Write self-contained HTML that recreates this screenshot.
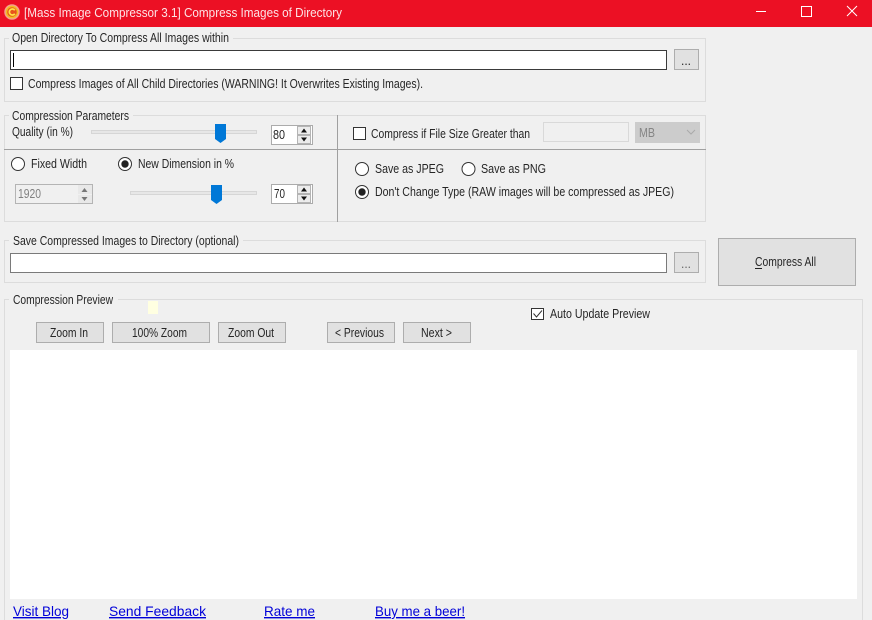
<!DOCTYPE html>
<html><head><meta charset="utf-8"><title>Mass Image Compressor</title>
<style>
html,body{margin:0;padding:0;width:872px;height:620px;overflow:hidden;background:#f0f0f0}
svg{display:block;font-family:"Liberation Sans",sans-serif;font-size:12.5px}
text{fill:#262626}
.g{fill:none;stroke:#dcdcdc}
.b{fill:#e1e1e1;stroke:#adadad}
.d{stroke:#a0a0a0;fill:none}
.l{font-size:14px;fill:#0000d8;text-decoration:underline}
</style></head><body>
<svg width="872" height="620" viewBox="0 0 872 620" xmlns="http://www.w3.org/2000/svg">
<rect width="872" height="620" fill="#f0f0f0"/>
<!-- title bar -->
<rect width="872" height="27" fill="#ec1024"/>
<circle cx="12" cy="12" r="7" fill="#f0c020" stroke="#f7a08a" stroke-width="1.500"/>
<circle cx="12" cy="12" r="4.800" fill="#e8541c"/>
<path d="M14.800 10.300A3 3 0 1 0 14.800 13.700" fill="none" stroke="#ffe14a" stroke-width="1.800"/>
<text x="24" y="17" textLength="318" lengthAdjust="spacingAndGlyphs" style="fill:#fde4e6;font-size:13px">[Mass Image Compressor 3.1] Compress Images of Directory</text>
<path d="M756 11.500H766" stroke="#fff" fill="none"/>
<rect x="801.500" y="6.500" width="10" height="10" fill="none" stroke="#fff"/>
<path d="M847 6L857 16M857 6L847 16" stroke="#fff" fill="none"/>

<!-- group 1 -->
<rect class="g" x="4.500" y="38.500" width="701" height="63"/>
<rect x="9" y="36" width="224" height="5" fill="#f0f0f0"/>
<text x="12" y="42" textLength="217" lengthAdjust="spacingAndGlyphs">Open Directory To Compress All Images within</text>
<rect x="10.500" y="50.500" width="656" height="19" fill="#fff" stroke="#3a3a3a"/>
<path d="M13.500 53V67" stroke="#000"/>
<rect class="b" x="674.500" y="49.500" width="24" height="20"/>
<text x="681" y="65" textLength="10" lengthAdjust="spacingAndGlyphs">...</text>
<rect x="10.500" y="77.500" width="12" height="12" fill="#fff" stroke="#333"/>
<text x="28" y="88" textLength="395" lengthAdjust="spacingAndGlyphs">Compress Images of All Child Directories (WARNING! It Overwrites Existing Images).</text>

<!-- params -->
<rect class="g" x="4.500" y="115.500" width="701" height="106"/>
<rect x="9" y="113" width="124" height="5" fill="#f0f0f0"/>
<path class="d" d="M4 149.500H706M337.500 115V222"/>
<text x="12" y="120" textLength="117" lengthAdjust="spacingAndGlyphs">Compression Parameters</text>
<text x="12" y="136" textLength="61" lengthAdjust="spacingAndGlyphs">Quality (in %)</text>
<rect x="91.500" y="130.500" width="165" height="3" fill="#e7e7e7" stroke="#d6d6d6"/>
<path d="M215 124H226V139L220.500 143L215 139Z" fill="#0078d7"/>
<rect x="271.500" y="125.500" width="41" height="19" fill="#fff" stroke="#ababab"/>
<text x="273" y="139" textLength="12" lengthAdjust="spacingAndGlyphs">80</text>
<rect x="297.500" y="126.500" width="13" height="8" fill="#ececec" stroke="#b4b4b4"/>
<rect x="297.500" y="135.500" width="13" height="8" fill="#ececec" stroke="#b4b4b4"/>
<path d="M301 132.500L304 128.500L307 132.500ZM301 137.500L304 141.500L307 137.500Z" fill="#111"/>

<circle cx="18" cy="164" r="6.500" fill="#fff" stroke="#333"/>
<text x="31" y="168" textLength="56" lengthAdjust="spacingAndGlyphs">Fixed Width</text>
<circle cx="125" cy="164" r="6.500" fill="#fff" stroke="#333"/>
<circle cx="125" cy="164" r="3.700" fill="#222"/>
<text x="138" y="168" textLength="96" lengthAdjust="spacingAndGlyphs">New Dimension in %</text>

<rect x="15.500" y="184.500" width="77" height="19" fill="#f0f0f0" stroke="#b4b4b4"/>
<text x="18" y="198" textLength="23" lengthAdjust="spacingAndGlyphs" style="fill:#808080">1920</text>
<rect x="78" y="185" width="14" height="9" fill="#e8e8e8"/>
<rect x="78" y="195" width="14" height="8" fill="#e8e8e8"/>
<path d="M81.500 192L84.500 188L87.500 192ZM81.500 197L84.500 201L87.500 197Z" fill="#777"/>
<rect x="130.500" y="191.500" width="126" height="3" fill="#e7e7e7" stroke="#d6d6d6"/>
<path d="M211 185H222V200L216.500 204L211 200Z" fill="#0078d7"/>
<rect x="271.500" y="184.500" width="41" height="19" fill="#fff" stroke="#ababab"/>
<text x="274" y="198" textLength="11" lengthAdjust="spacingAndGlyphs">70</text>
<rect x="297.500" y="185.500" width="13" height="8" fill="#ececec" stroke="#b4b4b4"/>
<rect x="297.500" y="194.500" width="13" height="8" fill="#ececec" stroke="#b4b4b4"/>
<path d="M301 191.500L304 187.500L307 191.500ZM301 196.500L304 200.500L307 196.500Z" fill="#111"/>

<!-- right params -->
<rect x="353.500" y="127.500" width="12" height="12" fill="#fff" stroke="#333"/>
<text x="371" y="138" textLength="159" lengthAdjust="spacingAndGlyphs">Compress if File Size Greater than</text>
<rect x="543.500" y="122.500" width="85" height="19" fill="#f0f0f0" stroke="#d9d9d9"/>
<rect x="635" y="122" width="65" height="21" fill="#cccccc"/>
<text x="639" y="137" textLength="16" lengthAdjust="spacingAndGlyphs" style="fill:#858585">MB</text>
<path d="M687 130L691 134L695 130" fill="none" stroke="#aaa"/>
<circle cx="362" cy="169" r="6.500" fill="#fff" stroke="#333"/>
<text x="375" y="173" textLength="69" lengthAdjust="spacingAndGlyphs">Save as JPEG</text>
<circle cx="468.500" cy="169" r="6.500" fill="#fff" stroke="#333"/>
<text x="481" y="173" textLength="65" lengthAdjust="spacingAndGlyphs">Save as PNG</text>
<circle cx="362" cy="192" r="6.500" fill="#fff" stroke="#333"/>
<circle cx="362" cy="192" r="3.700" fill="#222"/>
<text x="375" y="196" textLength="299" lengthAdjust="spacingAndGlyphs">Don't Change Type (RAW images will be compressed as JPEG)</text>

<!-- save group -->
<rect class="g" x="4.500" y="240.500" width="701" height="42"/>
<rect x="9" y="238" width="234" height="5" fill="#f0f0f0"/>
<text x="13" y="245" textLength="226" lengthAdjust="spacingAndGlyphs">Save Compressed Images to Directory (optional)</text>
<rect x="10.500" y="253.500" width="656" height="19" fill="#fff" stroke="#7a7a7a"/>
<rect class="b" x="674.500" y="252.500" width="24" height="20"/>
<text x="681" y="268" textLength="10" lengthAdjust="spacingAndGlyphs" style="fill:#666">...</text>
<rect class="b" x="718.500" y="238.500" width="137" height="47"/>
<text x="755" y="266" textLength="61" lengthAdjust="spacingAndGlyphs">Compress All</text>
<path d="M755 268.500H762" stroke="#222"/>

<!-- preview -->
<path class="g" d="M4.500 620V299.500H862.500V620"/>
<rect x="9" y="297" width="109" height="5" fill="#f0f0f0"/>
<text x="13" y="304" textLength="100" lengthAdjust="spacingAndGlyphs">Compression Preview</text>
<rect x="148" y="301" width="10" height="13" fill="#ffffe1"/>
<rect x="531.500" y="308.500" width="12" height="11" fill="#fff" stroke="#333"/>
<path d="M533.500 313.500L536.500 317L542 310.500" fill="none" stroke="#333"/>
<text x="550" y="318" textLength="100" lengthAdjust="spacingAndGlyphs">Auto Update Preview</text>
<rect class="b" x="36.500" y="322.500" width="67" height="20"/>
<text x="50" y="337" textLength="38" lengthAdjust="spacingAndGlyphs">Zoom In</text>
<rect class="b" x="112.500" y="322.500" width="97" height="20"/>
<text x="132" y="337" textLength="55" lengthAdjust="spacingAndGlyphs">100% Zoom</text>
<rect class="b" x="218.500" y="322.500" width="67" height="20"/>
<text x="228" y="337" textLength="46" lengthAdjust="spacingAndGlyphs">Zoom Out</text>
<rect class="b" x="327.500" y="322.500" width="67" height="20"/>
<text x="335" y="337" textLength="49" lengthAdjust="spacingAndGlyphs">&lt; Previous</text>
<rect class="b" x="403.500" y="322.500" width="67" height="20"/>
<text x="421" y="337" textLength="31" lengthAdjust="spacingAndGlyphs">Next &gt;</text>
<rect x="10" y="350" width="847" height="249" fill="#fff"/>

<!-- links -->
<text class="l" x="13" y="616" textLength="56" lengthAdjust="spacingAndGlyphs">Visit Blog</text>
<text class="l" x="109" y="616" textLength="97" lengthAdjust="spacingAndGlyphs">Send Feedback</text>
<text class="l" x="264" y="616" textLength="51" lengthAdjust="spacingAndGlyphs">Rate me</text>
<text class="l" x="375" y="616" textLength="90" lengthAdjust="spacingAndGlyphs">Buy me a beer!</text>
</svg>
</body></html>
